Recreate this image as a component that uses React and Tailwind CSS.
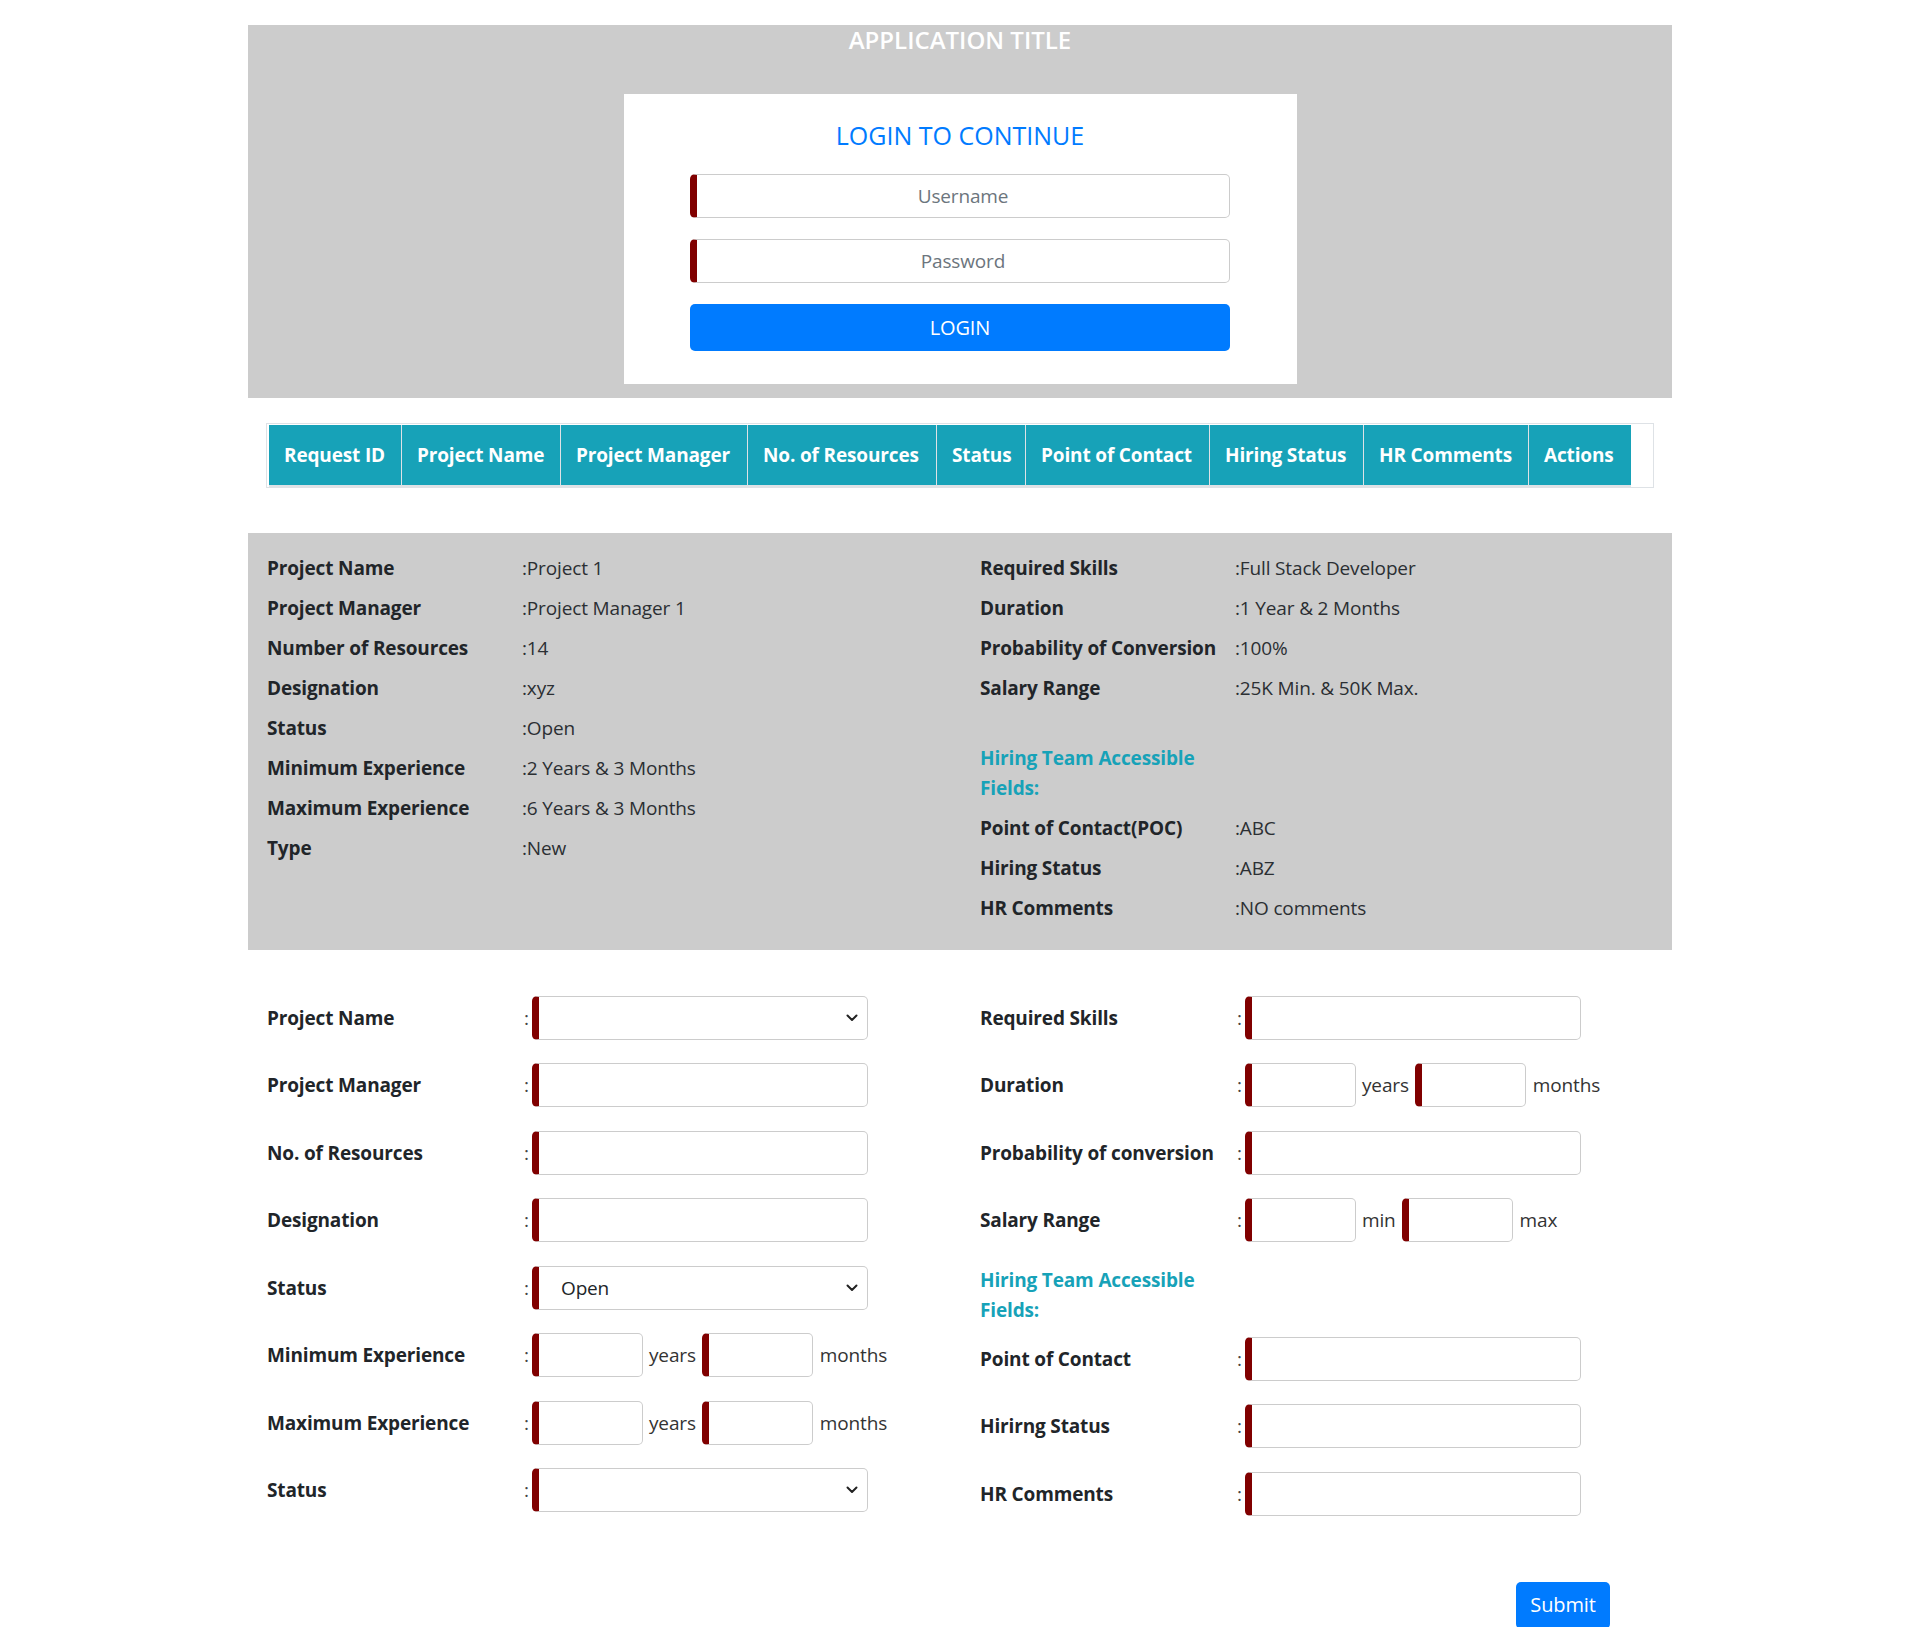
import React from "react";

const headers = [
  { label: "Request ID", w: "w-[132px]" },
  { label: "Project Name", w: "w-[159px]" },
  { label: "Project Manager", w: "w-[187px]" },
  { label: "No. of Resources", w: "w-[189px]" },
  { label: "Status", w: "w-[89px]" },
  { label: "Point of Contact", w: "w-[184px]" },
  { label: "Hiring Status", w: "w-[154px]" },
  { label: "HR Comments", w: "w-[165px]" },
  { label: "Actions", w: "w-[103px]" },
];

const leftDetails = [
  ["Project Name", "Project 1"],
  ["Project Manager", "Project Manager 1"],
  ["Number of Resources", "14"],
  ["Designation", "xyz"],
  ["Status", "Open"],
  ["Minimum Experience", "2 Years & 3 Months"],
  ["Maximum Experience", "6 Years & 3 Months"],
  ["Type", "New"],
];

const rightDetails = [
  ["Required Skills", "Full Stack Developer"],
  ["Duration", "1 Year & 2 Months"],
  ["Probability of Conversion", "100%"],
  ["Salary Range", "25K Min. & 50K Max."],
];

const hiringDetails = [
  ["Point of Contact(POC)", "ABC"],
  ["Hiring Status", "ABZ"],
  ["HR Comments", "NO comments"],
];

const DetailRow = ({ label, value }) => (
  <div className="flex h-[40px] items-center">
    <div className="w-[255px] shrink-0 whitespace-nowrap font-bold">{label}</div>
    <div className="whitespace-nowrap text-[#2b2f33]">:{value}</div>
  </div>
);

const Chevron = () => (
  <svg
    className="pointer-events-none absolute right-[10px] top-1/2 -translate-y-1/2"
    width="12"
    height="8"
    viewBox="0 0 12 8"
    fill="none"
  >
    <path d="M1.5 1.5 L6 6 L10.5 1.5" stroke="#222" strokeWidth="2" strokeLinecap="round" strokeLinejoin="round" />
  </svg>
);

const fieldBox =
  "h-[44px] rounded-[5px] border border-[#cccccc] border-l-[7px] border-l-[#800000] bg-white outline-none";

const TextField = ({ small }) => (
  <input type="text" className={`${fieldBox} ${small ? "w-[111px]" : "w-[336px]"}`} />
);

const SelectField = ({ value }) => (
  <div className="relative w-[336px]">
    <select
      defaultValue={value || ""}
      className={`${fieldBox} w-[336px] appearance-none pl-[22px] text-[#212529]`}
    >
      <option value=""></option>
      <option value="Open">Open</option>
      <option value="Closed">Closed</option>
    </select>
    <Chevron />
  </div>
);

const FormRow = ({ label, children }) => (
  <div className="flex h-[67.5px] items-center">
    <div className="w-[255px] shrink-0 whitespace-nowrap font-bold">{label}</div>
    <div className="w-[10px] shrink-0 pl-[2px] text-[#444]">:</div>
    <div className="flex items-center gap-[6px] text-[#333]">{children}</div>
  </div>
);

const Pair = ({ a, b }) => (
  <>
    <TextField small />
    <span>{a}</span>
    <TextField small />
    <span className="pl-[1px]">{b}</span>
  </>
);

export default function App() {
  return (
    <div className="min-h-[1627px] bg-white font-['Open_Sans','Noto_Sans',sans-serif] text-[19px] tracking-[-0.15px] text-[#212529]">
      <div className="mx-auto w-[1424px] pt-[25px]">
        {/* Login panel */}
        <div className="flex h-[373px] flex-col items-center bg-[#cccccc]">
          <h1 className="text-[24px] font-semibold leading-[30px] tracking-normal text-white">APPLICATION TITLE</h1>
          <div className="mt-[39px] flex h-[290px] w-[673px] flex-col items-center bg-white pt-[26px]">
            <h2 className="text-[25px] font-medium leading-[30px] tracking-normal text-[#007bff]">LOGIN TO CONTINUE</h2>
            <input
              type="text"
              placeholder="Username"
              className={`${fieldBox} mt-[24px] w-[540px] text-center text-[19px] placeholder:text-[#6c757d]`}
            />
            <input
              type="password"
              placeholder="Password"
              className={`${fieldBox} mt-[21px] w-[540px] text-center text-[19px] placeholder:text-[#6c757d]`}
            />
            <button className="mt-[21px] h-[47px] w-[540px] rounded-[5px] bg-[#007bff] text-[20px] text-white">
              LOGIN
            </button>
          </div>
        </div>

        {/* Requests table header */}
        <div className="mx-[18px] mt-[25px] border border-[#dee2e6] pl-[2px] pt-[1px]">
          <div className="flex h-[62px] w-[1362px] border-b-[2px] border-[#dee2e6] bg-[#17a2b8]">
            {headers.map((h, i) => (
              <div
                key={h.label}
                className={`${h.w} flex shrink-0 items-center whitespace-nowrap px-[15px] font-bold text-white ${
                  i > 0 ? "border-l border-[#dee2e6]" : ""
                }`}
              >
                {h.label}
              </div>
            ))}
          </div>
        </div>

        {/* Details panel */}
        <div className="mt-[45px] flex h-[417px] bg-[#cccccc] pt-[15px]">
          <div className="w-[712px] pl-[19px]">
            {leftDetails.map(([l, v]) => (
              <DetailRow key={l} label={l} value={v} />
            ))}
          </div>
          <div className="w-[712px] pl-[20px]">
            {rightDetails.map(([l, v]) => (
              <DetailRow key={l} label={l} value={v} />
            ))}
            <div className="mt-[35px] w-[255px] font-bold leading-[30px] text-[#17a2b8]">
              Hiring Team Accessible
              <br />
              Fields:
            </div>
            <div className="mt-[5px]">
              {hiringDetails.map(([l, v]) => (
                <DetailRow key={l} label={l} value={v} />
              ))}
            </div>
          </div>
        </div>

        {/* Edit form */}
        <div className="mt-[34px] flex">
          <div className="w-[712px] pl-[19px]">
            <FormRow label="Project Name">
              <SelectField />
            </FormRow>
            <FormRow label="Project Manager">
              <TextField />
            </FormRow>
            <FormRow label="No. of Resources">
              <TextField />
            </FormRow>
            <FormRow label="Designation">
              <TextField />
            </FormRow>
            <FormRow label="Status">
              <SelectField value="Open" />
            </FormRow>
            <FormRow label="Minimum Experience">
              <Pair a="years" b="months" />
            </FormRow>
            <FormRow label="Maximum Experience">
              <Pair a="years" b="months" />
            </FormRow>
            <FormRow label="Status">
              <SelectField />
            </FormRow>
          </div>
          <div className="w-[712px] pl-[20px]">
            <FormRow label="Required Skills">
              <TextField />
            </FormRow>
            <FormRow label="Duration">
              <Pair a="years" b="months" />
            </FormRow>
            <FormRow label="Probability of conversion">
              <TextField />
            </FormRow>
            <FormRow label="Salary Range">
              <Pair a="min" b="max" />
            </FormRow>
            <div className="mt-[11px] w-[255px] font-bold leading-[30px] text-[#17a2b8]">
              Hiring Team Accessible
              <br />
              Fields:
            </div>
            <FormRow label="Point of Contact">
              <TextField />
            </FormRow>
            <FormRow label="Hirirng Status">
              <TextField />
            </FormRow>
            <FormRow label="HR Comments">
              <TextField />
            </FormRow>
          </div>
        </div>

        <div className="mt-[54px] flex justify-end pr-[62px]">
          <button className="h-[47px] w-[94px] rounded-[5px] bg-[#007bff] text-[20px] text-white">Submit</button>
        </div>
      </div>
    </div>
  );
}
